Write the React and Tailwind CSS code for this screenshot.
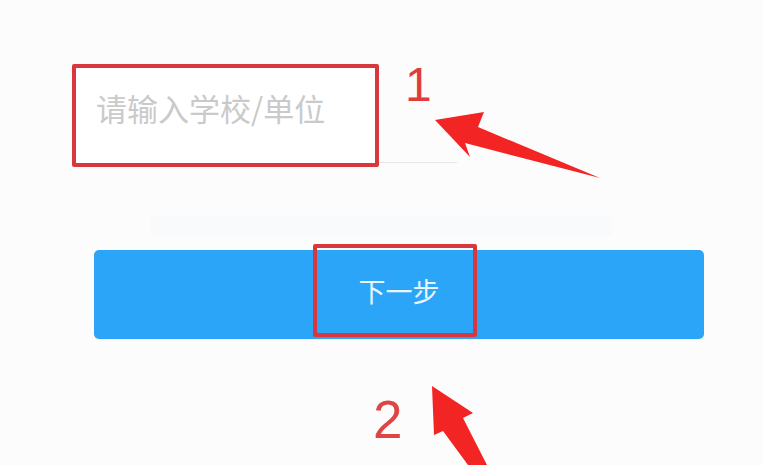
import React from 'react'

// Annotated form step: school/unit input + "next" button, with red callouts
const FONT = { fontFamily: '"Noto Sans CJK SC", "Liberation Sans", sans-serif' }

function Arrows() {
  return (
    <svg className="absolute left-0 top-0 pointer-events-none" width="762" height="465" viewBox="0 0 762 465">
      <polygon
        points="435,120 484,112 478,127 600,178 465,143 470,157"
        fill="#f22424"
      />
      <polygon
        points="432,386 473,413 463,418 487,465 468,465 443,431 434,435"
        fill="#f22424"
      />
    </svg>
  )
}

export default function App() {
  return (
    <div className="relative w-[762px] h-[465px] overflow-hidden bg-[#fcfcfc]" style={FONT}>
      {/* Input row */}
      <div className="pt-[64px] pl-[72px] flex items-end">
        <div className="w-[307px] h-[103px] border-4 border-[#d8383d] rounded-[2px] bg-white pl-[20px] pt-[24px]">
          <span className="text-[31px] leading-none text-[#cacaca]">请输入学校/单位</span>
        </div>
        <div className="w-[78px] h-px bg-[#e6e6e6] mb-[4px]" />
      </div>

      {/* Faint divider band */}
      <div className="mt-[48px] mx-[150px] h-[20px] bg-[#f8fafc]" />

      {/* Next button */}
      <div className="mt-[15px] pl-[94px]">
        <div className="w-[610px] h-[89px] bg-[#2aa5f7] rounded-[5px] flex items-start pl-[219px]">
          <div className="-mt-[6px] w-[164px] h-[93px] border-4 border-[#d8383d] rounded-[2px] flex items-center justify-center pl-[8px]">
            <span className="text-[27px] leading-none text-[#eaf5fd]">下一步</span>
          </div>
        </div>
      </div>

      {/* Callout numbers */}
      <span className="absolute left-[405px] top-[61px] text-[48px] leading-none text-[#e03c3c]" style={{ fontFamily: '"Liberation Sans", sans-serif' }}>1</span>
      <span className="absolute left-[373px] top-[393px] text-[53px] leading-none text-[#e04545]" style={{ fontFamily: '"Liberation Sans", sans-serif' }}>2</span>

      <Arrows />
    </div>
  )
}
